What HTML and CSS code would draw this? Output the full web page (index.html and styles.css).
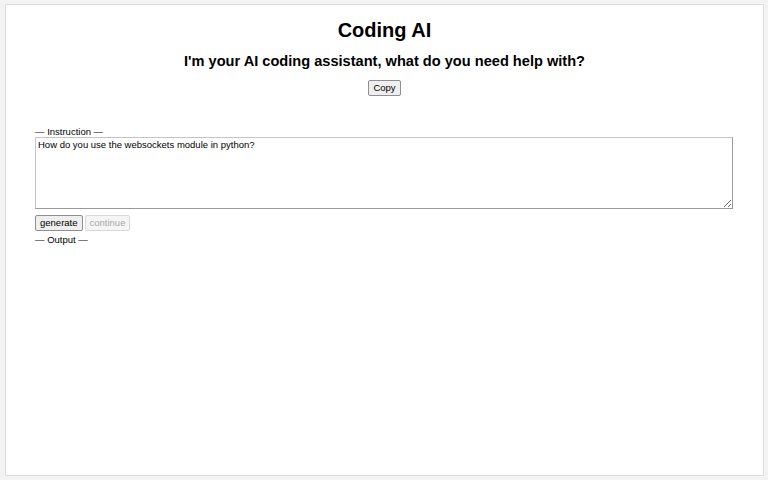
FILE: index.html
```html
<!DOCTYPE html>
<html>
<head>
<meta charset="utf-8">
<link rel="stylesheet" href="styles.css">
</head>
<body>
<main class="card">
  <h1 class="title">Coding AI</h1>
  <h2 class="subtitle">I'm your AI coding assistant, what do you need help with?</h2>
  <div class="copy-row"><button class="btn">Copy</button></div>
  <section class="form">
    <div class="label">— Instruction —</div>
    <textarea class="input">How do you use the websockets module in python?</textarea>
    <div class="actions">
      <button class="btn">generate</button>
      <button class="btn" disabled>continue</button>
    </div>
    <div class="label">— Output —</div>
  </section>
</main>
</body>
</html>
```
FILE: styles.css
```css
html, body {
  margin: 0;
  padding: 0;
  height: 100%;
}
body {
  background: #f3f3f3;
  font-family: "Liberation Sans", Arial, sans-serif;
  color: #000;
  padding: 4px;
  box-sizing: border-box;
}
.card {
  box-sizing: border-box;
  height: 472px;
  margin: 0 0 0 1px;
  width: 759px;
  background: #fff;
  border: 1px solid #dcdcdc;
  padding: 13px 29px 0 29px;
}
.title {
  margin: 0;
  text-align: center;
  font-size: 20px;
  font-weight: bold;
  line-height: 24px;
}
.subtitle {
  margin: 10px 0 0 0;
  text-align: center;
  font-size: 14.6px;
  font-weight: bold;
  line-height: 18px;
}
.copy-row {
  text-align: center;
  margin-top: 7px;
}
.btn {
  font-family: "Liberation Sans", Arial, sans-serif;
  font-size: 9.5px;
  line-height: 12px;
  padding: 1px 4px;
  background: #efefef;
  border: 1px solid #8f8f8f;
  border-radius: 2px;
  color: #000;
}
.btn:disabled {
  color: #a8a8a8;
  border-color: #d8d8d8;
  background: #f5f5f5;
}
.form {
  margin-top: 30px;
}
.label {
  font-size: 9.5px;
  line-height: 11px;
  color: #000;
}
.input {
  display: block;
  box-sizing: border-box;
  width: 698px;
  height: 72px;
  margin: 0;
  padding: 1px 2px;
  font-family: "Liberation Sans", Arial, sans-serif;
  font-size: 9.5px;
  line-height: 12px;
  border: 1px solid #9a9a9a;
  border-top-color: #c4c4c4;
  border-left-color: #c4c4c4;
  resize: both;
}
.actions {
  display: flex;
  gap: 2px;
  margin: 6px 0 3px 0;
}
```
